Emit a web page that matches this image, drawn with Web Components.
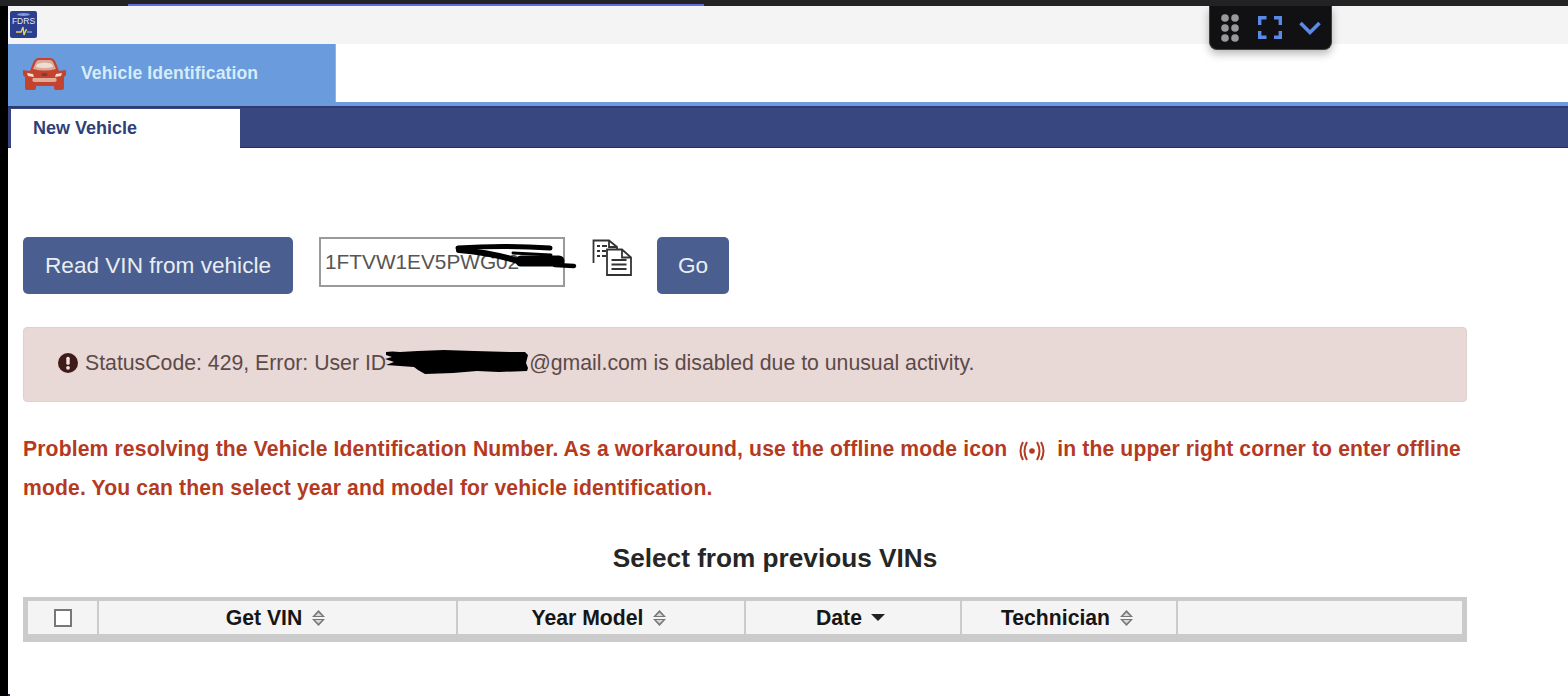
<!DOCTYPE html>
<html lang="en"><head><meta charset="utf-8"><title>Vehicle Identification</title>
<style>
html,body{margin:0;padding:0;height:696px;overflow:hidden;background:#fff}
body{font-family:"Liberation Sans",Arial,sans-serif}
</style></head><body>
<fdrs-app></fdrs-app>
<script>
function def(name, html){
  customElements.define(name, class extends HTMLElement{
    constructor(){super();const r=this.attachShadow({mode:'open'});r.innerHTML=html;}
  });
}
def('fdrs-toolbar',`<style>
:host{position:absolute;left:1209px;top:6px;width:123px;height:44px;box-sizing:border-box;background:#111113;border:1px solid #3e3e40;border-top:0;border-radius:0 0 8px 8px;box-shadow:0 4px 8px rgba(0,0,0,.28);display:block}
svg{display:block}
</style><svg width="121" height="43" viewBox="0 0 121 43">
<g fill="#9a9a9a"><circle cx="15" cy="12" r="3.8"/><circle cx="25" cy="12" r="3.8"/><circle cx="15" cy="22" r="3.8"/><circle cx="25" cy="22" r="3.8"/><circle cx="15" cy="32" r="3.8"/><circle cx="25" cy="32" r="3.8"/></g>
<path d="M49.700 19V11.700H56.500M64 11.700H70.300V19M49.700 25V31.300H56.500M64 31.300H70.300V25" fill="none" stroke="#5b8ae6" stroke-width="3.400"/>
<path d="M90.500 17l9.500 9.500 9.500-9.500" fill="none" stroke="#5b8ae6" stroke-width="3.600"/>
</svg>`);
def('fdrs-titlebar',`<style>
:host{display:flex;height:38px;background:#f4f4f4;align-items:flex-start;padding:5px 0 0 2px;box-sizing:border-box}
.logo{width:27px;height:27px;background:#2b3f8e;border-radius:2px;position:relative;overflow:hidden;display:flex;flex-direction:column;align-items:center}
.logo i{display:block;width:13px;height:3px;margin-top:2px;border-radius:50%;background:#7f9bd6}
.logo span{font:400 8.500px/9px "Liberation Sans",sans-serif;color:#e3e9f8;margin-top:1px}
.logo svg{display:block;margin-top:-1px}
</style><div class="logo"><i></i><span>FDRS</span><svg width="23" height="12" viewBox="0 0 23 12"><path d="M4 7h5l2-5 1 8 2-5h1" fill="none" stroke="#e6d25a" stroke-width="1.400"/><path d="M15 7h5" stroke="#8fd0e8" stroke-width="1.200"/></svg></div>`);
def('fdrs-modulebar',`<style>
:host{display:flex;height:58px;background:#fff}
.tab{width:328px;background:#6a9bdc;display:flex;align-items:center;box-sizing:border-box;padding:1px 0 0 15px;gap:15px;border-right:1px solid #8eb4e6}
.tab span{font:700 17.600px "Liberation Sans",sans-serif;color:#d5ecfb;letter-spacing:.1px}
svg{display:block}
</style><div class="tab"><svg width="43" height="32" viewBox="0 0 43 32">
<path d="M0 12l7 1 3-8q2-5 6-5h11q4 0 6 5l3 8 7-1 0 5-2 2v11q0 2-2 2h-6q-2 0-2-2v-2H13v2q0 2-2 2H4q-2 0-2-2V19l-2-2z" fill="#c4432e"/>
<path d="M10 11l3-7q1-2 3-2h11q2 0 3 2l3 7q-11 3-23 0z" fill="#d9a999"/>
<path d="M14 6q8-3 15 0l1 3q-8 2-17 0z" fill="#efdcd5"/>
<path d="M10 20h23q2 4-2 4H12q-4 0-2-4z" fill="#e2ab99"/>
<path d="M4 15l6 1 1 3-6-1zM39 15l-6 1-1 3 6-1z" fill="#f4e0d2"/>
<ellipse cx="21.500" cy="16.500" rx="3" ry="1.500" fill="#7f3a3a"/>
</svg><span>Vehicle Identification</span></div>`);
def('fdrs-tabbar',`<style>
:host{display:block;border-top:4px solid #6a9bdc;background:#38477f;height:46px;box-sizing:border-box;border-bottom:1px solid #262f5c;box-shadow:inset 0 2px 0 #2e3a70;padding:3px 0 0 3px}
.t{width:229px;height:40px;background:#fff;box-sizing:border-box;padding:10px 0 0 22px;font:700 18px/19px "Liberation Sans",sans-serif;color:#2f3f78}
</style><div class="t">New Vehicle</div>`);
def('fdrs-button',`<style>
:host{display:flex;align-items:center;justify-content:center;height:57px;box-sizing:border-box;background:#4a5f8f;border-radius:5px;color:#e9edf4;font:22.600px "Liberation Sans",sans-serif;padding:0 22px;white-space:nowrap}
</style><slot></slot>`);
def('vin-input',`<style>
:host{display:block;position:relative;width:246px;height:50px;box-sizing:border-box;border:2px solid #9a9a9a;background:#fff;overflow:visible}
.v{font:20.800px/46px "Liberation Sans",sans-serif;color:#555;padding-left:4px;white-space:nowrap;overflow:hidden;height:46px}
svg{position:absolute;left:134px;top:6px;overflow:visible}
</style><div class="v">1FTVW1EV5PWG02</div>
<svg width="122" height="26" viewBox="0 0 122 26" fill="none" stroke="#000" stroke-linecap="round"><path d="M3 3q45-3 92 0" stroke-width="5"/><path d="M4 5q35 3 62 12" stroke-width="6"/><path d="M58 8l38 2" stroke-width="3"/><path d="M66 16l38 0" stroke-width="11"/><path d="M100 20l19 1" stroke-width="4.500"/></svg>`);
def('copy-icon',`<style>:host{display:block;width:40px;height:40px}svg{display:block}</style>
<svg width="40" height="40" viewBox="0 0 40 40" fill="none" stroke="#333" stroke-width="1.800">
<path d="M1.500 25V2.500H17L25 9V11"/><path d="M17 2.500V9H25"/><path d="M5 8h3M10 8h5M5 13h3M10 13h4M5 18h3M10 18h4"/>
<path d="M15 11.500H30L39 19.500V37H15z" fill="#fff"/><path d="M30 11.500V19.500H39" /><path d="M19.500 22h15M19.500 26.500h15M19.500 31h15"/></svg>`);
def('vin-form',`<style>
:host{display:flex;align-items:flex-start}
vin-input{margin-left:26px}
copy-icon{margin:1px 0 0 27px}
fdrs-button.go{margin-left:25px;padding:0 21px}
</style><fdrs-button>Read VIN from vehicle</fdrs-button><vin-input></vin-input><copy-icon></copy-icon><fdrs-button class="go">Go</fdrs-button>`);
def('error-alert',`<style>
:host{display:flex;align-items:center;width:1444px;height:75px;box-sizing:border-box;background:#e8d8d6;border:1px solid #e2d0ce;border-radius:4px;padding:0 0 3px 34px;color:#5d4a48;font:21.250px "Liberation Sans",sans-serif;white-space:nowrap}
svg.i{margin-right:7px;flex:none}
.r{display:inline-block;position:relative;width:143px;height:24px;flex:none}
.r svg{position:absolute;left:0;top:-2px;overflow:visible}
</style><svg class="i" width="20" height="20" viewBox="0 0 20 20"><circle cx="10" cy="10" r="10" fill="#3f1c18"/><rect x="8.300" y="3.800" width="3.400" height="8" rx="1.500" fill="#efe2e0"/><circle cx="10" cy="14.800" r="1.900" fill="#efe2e0"/></svg>
<span>StatusCode: 429, Error: User ID</span><span class="r"><svg width="143" height="26" viewBox="0 0 143 26"><path d="M0 3q6-1 14 0l18-1 26-1 30 1 38 1 13 0 3 3-2 8 2 5-1 3-28 1-22-1-24 2-28 1-7-4-4-3-14-1-14-1 8-3-9-3 7-2-6-2z" fill="#000"/></svg></span><span>@gmail.com is disabled due to unusual activity.</span>`);
def('problem-text',`<style>
:host{display:block;width:1444px;color:#b53a22;font:700 21.150px/39px "Liberation Sans",sans-serif;letter-spacing:.13px}
svg{display:inline-block;vertical-align:-6px;margin:0 10px 0 10px}
</style>Problem resolving the Vehicle Identification Number. As a workaround, use the offline mode icon<svg width="30" height="22" viewBox="0 0 30 22" fill="none" stroke="#b53a22"><path d="M6 2Q1 11 6 20" stroke-width="2"/><path d="M10 2Q5 11 10 20" stroke-width="2"/><circle cx="15" cy="11" r="2.800" fill="#b53a22" stroke="none"/><path d="M20 2Q25 11 20 20" stroke-width="2"/><path d="M24 2Q29 11 24 20" stroke-width="2"/></svg>in the upper right corner to enter offline mode. You can then select year and model for vehicle identification.`);
def('sort-icon',`<style>:host{display:inline-block;width:15px;height:18px;margin:0 3px 0 9px;vertical-align:-4px}svg{display:block}</style>
<svg width="15" height="18" viewBox="0 0 15 18" fill="#777"><path d="M7.500 1l6.500 7H1z"/><path d="M7.500 17L1 10h13z"/><path d="M7.500 3.500L4 7h7zM7.500 14.500L4 11h7z" fill="#d8d8d8"/></svg>`);
def('sort-down',`<style>:host{display:inline-block;width:14px;height:7px;margin:0 5px 0 9px;vertical-align:2px}svg{display:block}</style>
<svg width="14" height="7" viewBox="0 0 14 7"><path d="M0 0h14L7 7z" fill="#222"/></svg>`);
def('vin-table',`<style>
:host{display:grid;grid-template-columns:69px 357px 286px 214px 214px 1fr;gap:2px;width:1444px;height:45px;box-sizing:border-box;background:#cbcbcb;padding:4px 5px 8px 5px;font:700 21.200px "Liberation Sans",sans-serif;color:#161616}
div{background:#f4f4f4;display:flex;align-items:center;justify-content:center;white-space:nowrap;box-sizing:border-box}
i{display:block;width:18px;height:18px;box-sizing:border-box;border:2px solid #777;background:#fff;margin-top:1px}
</style><div><i></i></div><div>Get VIN<sort-icon></sort-icon></div><div>Year Model<sort-icon></sort-icon></div><div>Date<sort-down></sort-down></div><div>Technician<sort-icon></sort-icon></div><div></div>`);
def('fdrs-content',`<style>
:host{display:flex;flex-direction:column;padding:89px 0 0 15px;background:#fff;height:546px;box-sizing:border-box}
error-alert{margin-top:33px}
problem-text{margin-top:27px}
h2{width:1504px;margin:32px 0 0;text-align:center;font:700 26.200px/38px "Liberation Sans",sans-serif;color:#262626}
vin-table{margin-top:20px}
</style><vin-form></vin-form><error-alert></error-alert><problem-text></problem-text><h2>Select from previous VINs</h2><vin-table></vin-table>`);
def('fdrs-app',`<style>
:host{display:block;position:relative;width:1568px;height:696px;background:#000;overflow:hidden}
.top{height:6px;background:#232325;position:relative}
.top b{display:block;position:absolute;left:128px;width:576px;top:4px;height:2px;background:#5a6fe0}
.main{margin-left:8px;height:690px;background:#fff;box-shadow:inset 2px 0 0 #26306a}
</style><div class="top"><b></b></div><div class="main"><fdrs-titlebar></fdrs-titlebar><fdrs-modulebar></fdrs-modulebar><fdrs-tabbar></fdrs-tabbar><fdrs-content></fdrs-content></div><fdrs-toolbar></fdrs-toolbar>`);
</script>
</body></html>
